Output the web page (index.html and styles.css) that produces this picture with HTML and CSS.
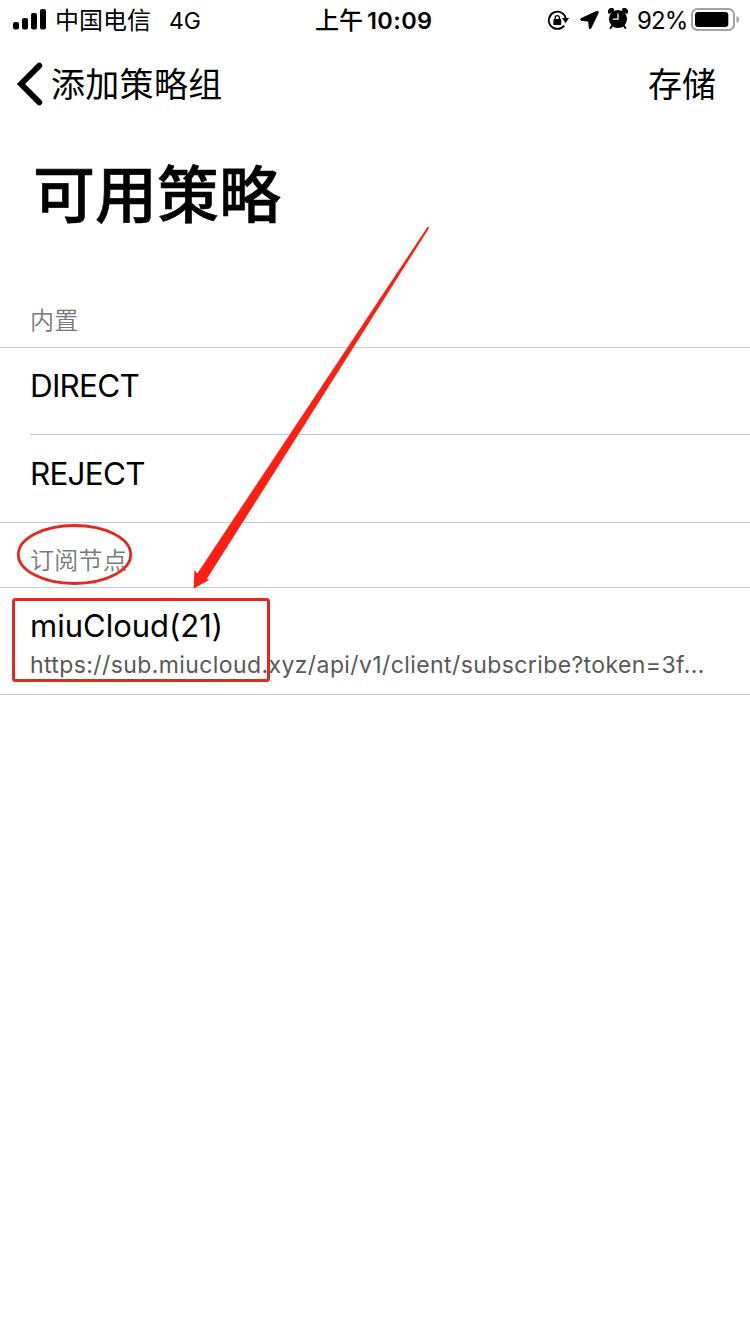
FILE: index.html
```html
<!DOCTYPE html>
<html lang="zh-CN">
<head>
<meta charset="utf-8">
<title>可用策略</title>
<link rel="stylesheet" href="styles.css">
</head>
<body>
<div class="screen">
  <header class="status">
    <div class="status-left">
      <svg class="signal" width="34" height="22" viewBox="0 0 34 22"><rect x="0" y="14" width="6" height="7.5" rx="2"/><rect x="9" y="10" width="6" height="11.5" rx="2"/><rect x="18" y="5" width="6" height="16.5" rx="2"/><rect x="27" y="1" width="6" height="20.5" rx="2"/></svg>
      <span class="carrier">中国电信</span>
      <span class="network">4G</span>
    </div>
    <div class="clock"><span class="period">上午</span><span class="time">10:09</span></div>
    <div class="status-right">
      <svg class="lock" width="22" height="22" viewBox="0 0 22 22"><path d="M18.9 9A8.6 8.6 0 1 0 17.2 15.6" fill="none" stroke="#000" stroke-width="1.8"/><path d="M15 8H22L18.6 13.2Z"/><rect x="6.4" y="9" width="7.8" height="6" rx=".8"/><path d="M8.2 9.4V7.7a2.1 2.1 0 0 1 4.2 0V9.4" fill="none" stroke="#000" stroke-width="1.4"/></svg>
      <svg class="locate" width="20" height="20" viewBox="0 0 20 20"><path d="M16.8 1.3 1 8.6Q-.3 9.7 1.2 10.4L8.6 11.2 9.3 18.2Q9.9 19.7 10.9 18.3L18.3 2.8Q18.7.8 16.8 1.3Z" stroke="#000" stroke-width=".8" stroke-linejoin="round"/></svg>
      <svg class="alarm" width="20" height="22" viewBox="0 0 20 22"><circle cx="10" cy="11" r="9.1"/><path d="M.8 6A3.2 3.2 0 0 1 6.2 1.2L5.5 4ZM19.2 6A3.2 3.2 0 0 0 13.8 1.2L14.5 4Z"/><path d="M4 18 2.6 20M16 18 17.4 20" stroke="#000" stroke-width="2" stroke-linecap="round"/><path d="M10 5.4V11.2H4.8" fill="none" stroke="#fff" stroke-width="1.3"/></svg>
      <span class="percent">92%</span>
      <svg class="battery" width="50" height="24" viewBox="0 0 50 24"><rect x="1" y="1" width="42" height="21" rx="5.5" fill="#fff" stroke="#a2a2a2" stroke-width="2"/><rect x="4" y="4" width="33.3" height="15" rx="3"/><path d="M45.5 8Q48.3 9 48.3 11.5T45.5 15Z" fill="#a2a2a2"/></svg>
    </div>
  </header>
  <nav class="nav">
    <div class="back"><svg width="28" height="44" viewBox="0 0 28 44"><path d="M23.3 3.6 5 22 23.3 40.4" fill="none" stroke="#000" stroke-width="5.8" stroke-linecap="round" stroke-linejoin="miter"/></svg><span>添加策略组</span></div>
    <span class="save">存储</span>
  </nav>
  <h1 class="title">可用策略</h1>
  <main>
    <h2 class="group first">内置</h2>
    <div class="list">
      <div class="row">DIRECT</div>
      <div class="row second">REJECT</div>
    </div>
    <h2 class="group">订阅节点</h2>
    <div class="list">
      <div class="source"><div class="name">miuCloud(21)</div><div class="url">https://sub.miucloud.xyz/api/v1/client/subscribe?token=3f...</div></div>
    </div>
  </main>
  <svg class="marks" width="750" height="1334" viewBox="0 0 750 1334">
    <ellipse cx="74.5" cy="554.5" rx="56.2" ry="29" fill="none" stroke="#e5281f" stroke-width="2.8"/>
    <rect x="13.5" y="599.5" width="255" height="81" rx="2" fill="none" stroke="#e5281f" stroke-width="3"/>
    <path d="M427.6 226.8 429.2 227.8 206.8 579 209.5 579.8 193.5 588.5 194.5 570 197.3 573.5Z" fill="#ff1e12"/>
  </svg>
</div>
</body>
</html>
```
FILE: styles.css
```css
* { box-sizing: border-box; }
body { margin: 0; background: #fff; color: #000; font-family: Inter, "Noto Sans CJK SC", sans-serif; }
.screen { position: relative; width: 750px; height: 1334px; overflow: hidden; background: #fff; }
svg { display: block; flex: none; }
.status { display: grid; grid-template-columns: 250px 250px 250px; height: 40px; line-height: 42px; font-size: 24px; white-space: nowrap; }
.status-left { display: flex; padding-left: 13px; }
.signal { margin-top: 8px; }
.carrier { width: 96px; margin-left: 8px; }
.network { margin-left: 18px; font-size: 23px; }
.clock { display: flex; padding-left: 65px; font-weight: 500; }
.time { margin-left: 4px; font-size: 23.5px; font-weight: 600; letter-spacing: .4px; }
.status-right { display: flex; padding-left: 47px; }
.lock { margin-top: 10px; }
.locate { margin: 10px 0 0 11px; }
.alarm { margin: 8px 0 0 8px; }
.percent { width: 50px; margin-left: 9px; font-size: 24px; letter-spacing: -.9px; }
.battery { margin: 8px 0 0 4px; }
.nav { display: flex; justify-content: space-between; height: 88px; padding: 0 34px 0 16px; line-height: 90px; font-size: 34px; }
.back { display: flex; }
.back svg { margin-top: 22px; }
.back span { margin-left: 7px; letter-spacing: .3px; }
.title { height: 132px; margin: 0; padding-left: 33px; font-size: 62px; line-height: 135px; font-weight: 500; -webkit-text-stroke: .6px #000; }
.group { height: 64px; margin: 0; padding: 14px 0 0 30px; font-size: 24px; line-height: 48px; font-weight: 350; letter-spacing: .3px; color: #78787c; }
.first { height: 87px; padding-top: 37px; }
.list { border-top: 1px solid #c8c7cc; border-bottom: 1px solid #c8c7cc; }
.row { height: 86px; padding-left: 30px; line-height: 76px; font-size: 31.5px; letter-spacing: -.8px; }
.second { height: 88px; margin-left: 30px; padding-left: 0; border-top: 1px solid #c8c7cc; line-height: 78px; }
.source { height: 106px; padding: 18px 30px 0; }
.name { height: 40px; line-height: 40px; font-size: 31px; }
.url { height: 36px; line-height: 38px; font-size: 23px; letter-spacing: .4px; color: #58585a; white-space: nowrap; }
.marks { position: absolute; top: 0; left: 0; }
```
